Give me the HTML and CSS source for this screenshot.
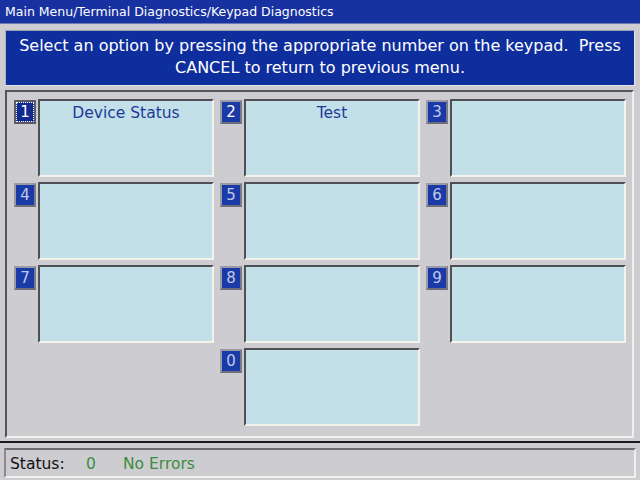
FILE: index.html
```html
<!DOCTYPE html>
<html>
<head>
<meta charset="utf-8">
<link rel="stylesheet" href="styles.css">
</head>
<body>
<div class="screen">
  <div class="titlebar">Main Menu/Terminal Diagnostics/Keypad Diagnostics</div>
  <div class="instr">Select an option by pressing the appropriate number on the keypad.&nbsp; Press<br>CANCEL to return to previous menu.</div>
  <div class="panel">
    <div class="grid">
      <div class="cell"><div class="badge focus"><span>1</span></div><div class="box">Device Status</div></div>
      <div class="cell"><div class="badge"><span>2</span></div><div class="box">Test</div></div>
      <div class="cell"><div class="badge dim"><span>3</span></div><div class="box"></div></div>
      <div class="cell"><div class="badge dim"><span>4</span></div><div class="box"></div></div>
      <div class="cell"><div class="badge dim"><span>5</span></div><div class="box"></div></div>
      <div class="cell"><div class="badge dim"><span>6</span></div><div class="box"></div></div>
      <div class="cell"><div class="badge dim"><span>7</span></div><div class="box"></div></div>
      <div class="cell"><div class="badge dim"><span>8</span></div><div class="box"></div></div>
      <div class="cell"><div class="badge dim"><span>9</span></div><div class="box"></div></div>
      <div class="cell empty"></div>
      <div class="cell"><div class="badge dim"><span>0</span></div><div class="box"></div></div>
      <div class="cell empty"></div>
    </div>
  </div>
  <div class="sep"></div>
  <div class="status">
    <span class="lbl">Status:</span><span class="code">0</span><span class="msg">No Errors</span>
  </div>
</div>
</body>
</html>
```

FILE: styles.css
```css
html, body {
  margin: 0;
  padding: 0;
  background: #cdccd1;
}
.screen {
  width: 640px;
  height: 480px;
  overflow: hidden;
  font-family: "DejaVu Sans", Verdana, sans-serif;
  background: #cdccd1;
}
.titlebar {
  height: 24px;
  line-height: 24px;
  background: #1732a0;
  color: #ffffff;
  font-size: 12.5px;
  padding-left: 5px;
  border-bottom: 1px solid #6a7ab8;
  box-sizing: border-box;
}
.instr {
  margin: 6px 5px 0 5px;
  height: 56px;
  box-sizing: border-box;
  background: #0f2e9e;
  border: 1px solid #e8e6e8;
  border-top-color: #9a9aa8;
  border-left-color: #b0b0b8;
  color: #ffffff;
  font-size: 16px;
  line-height: 22px;
  text-align: center;
  padding-top: 4px;
}
.panel {
  margin: 4px 6px 0 5px;
  height: 348px;
  box-sizing: border-box;
  border-top: 2px solid #55555a;
  border-left: 2px solid #55555a;
  border-right: 2px solid #f2eeea;
  border-bottom: 2px solid #f2eeea;
  padding: 7px 0 0 7px;
}
.grid {
  display: grid;
  grid-template-columns: repeat(3, 200px);
  grid-auto-rows: 78px;
  column-gap: 6px;
  row-gap: 5px;
}
.cell {
  display: flex;
  align-items: flex-start;
}
.badge {
  width: 22px;
  height: 24px;
  margin-top: 1px;
  box-sizing: border-box;
  border: 2px solid #9a9aa6;
  border-right-color: #7a7a86;
  border-bottom-color: #6e6e7a;
  background: #1a3aa8;
  color: #ffffff;
  font-size: 15px;
  display: flex;
  align-items: center;
  justify-content: center;
  flex: none;
}
.badge.dim {
  color: #c0c8e8;
}
.badge.focus {
  border-color: #5a5a66;
}
.badge.focus span {
  outline: 1px dotted #ffffff;
  outline-offset: 0;
  width: 16px;
  height: 18px;
  display: flex;
  align-items: center;
  justify-content: center;
  background: #102a90;
}
.box {
  margin-left: 2px;
  width: 176px;
  height: 78px;
  box-sizing: border-box;
  background: #c3e0e8;
  border-top: 2px solid #4e5056;
  border-left: 2px solid #4e5056;
  border-right: 2px solid #f4f2ea;
  border-bottom: 2px solid #f4f2ea;
  color: #1c3a98;
  font-size: 15.5px;
  text-align: center;
  padding-top: 3px;
}
.sep {
  margin-top: 3px;
  height: 2px;
  background: #1a1a1e;
}
.status {
  margin: 5px 4px 0 4px;
  height: 30px;
  box-sizing: border-box;
  border-top: 2px solid #6a6a70;
  border-left: 2px solid #8a8a90;
  border-right: 2px solid #f2eeea;
  border-bottom: 2px solid #f2eeea;
  display: flex;
  align-items: center;
  font-size: 15.5px;
  padding-left: 4px;
  padding-top: 1px;
}
.lbl {
  color: #111111;
  width: 76px;
}
.code {
  color: #3c8c3c;
  width: 37px;
}
.msg {
  color: #3c8c3c;
}
```
